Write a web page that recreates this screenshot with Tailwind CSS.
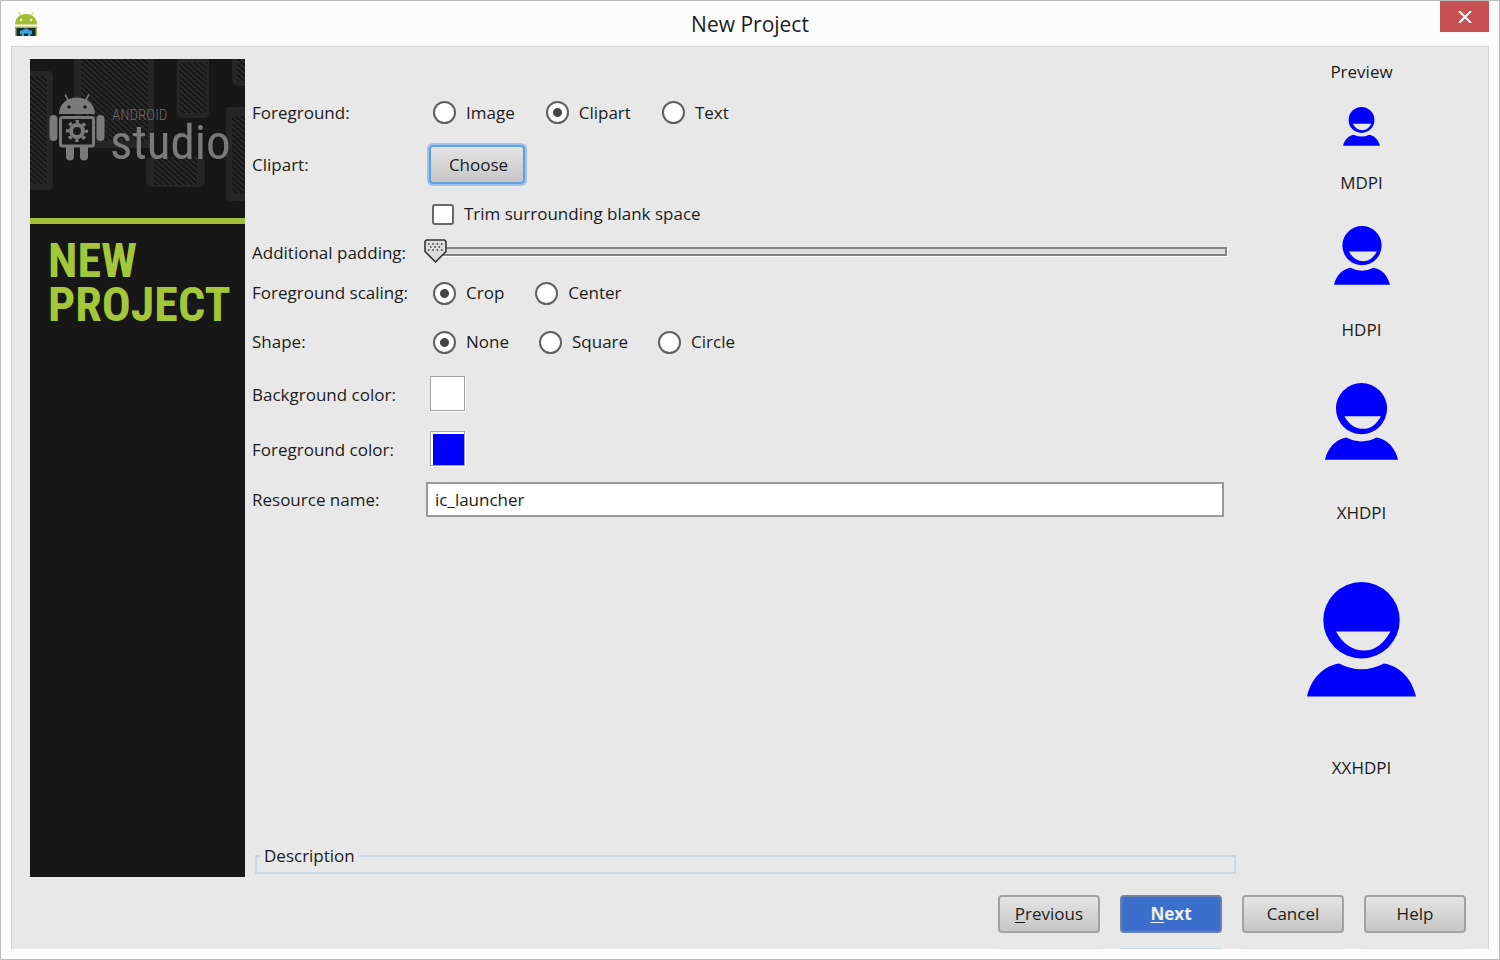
<!DOCTYPE html>
<html lang="en">

<head>
    <meta charset="utf-8" />
    <meta name="viewport" content="width=device-width, initial-scale=1" />
    <title>New Project</title>
    <script src="https://cdn.jsdelivr.net/npm/@tailwindcss/browser@4"></script>
</head>

<body class="min-h-screen flex flex-col bg-[#fcfcfc] border border-[#bababa] font-['Open_Sans',sans-serif] text-[17px] leading-6 text-[#1c1c1c]">
    <!-- title bar -->
    <header class="grid grid-cols-[1fr_auto_1fr] h-[45px] items-center px-[10px]">
        <svg class="w-6 h-6 ml-[3px]" viewBox="0 0 24 24">
            <path d="M6.500 3L4.500 .5M17.500 3L19.500 .5" stroke="#b9d26a" stroke-width="1.200" />
            <path d="M1 12.500C1 6 6 2 12 2S23 6 23 12.500Z" fill="#a0c032" />
            <circle cx="7" cy="8" r="1.200" fill="#fff" />
            <circle cx="17" cy="8" r="1.200" fill="#fff" />
            <path d="M1 14.500H23V24H1Z" fill="#a0c032" />
            <path d="M2.500 16H21.500V24H2.500Z" fill="#1b2a33" />
            <path d="M7.500 24V22H6V18.500H9V17.500H10.500V16.500H13.500V17.500H15V18.500H18V22H16.500V24H14V21.500H10V24Z" fill="#3da5dc" />
        </svg>
        <h1 class="text-[21px]">New Project</h1>
        <button aria-label="Close" class="justify-self-end self-start w-[49px] h-[31px] bg-[#c75050] flex items-center justify-center">
            <svg class="w-[14px] h-3" viewBox="0 0 14 12"><path d="M1 0L13 12M13 0L1 12" stroke="#fff" stroke-width="2" /></svg>
        </button>
    </header>

    <main class="flex-1 flex flex-col mx-[10px] mb-[10px] bg-[#e8e8e8] border border-b-0 border-[#d4d4d4]">
        <div class="flex-1 flex pl-[18px]">
            <!-- banner -->
            <aside class="w-[215px] shrink-0 mt-3 bg-[#171717]">
                <svg class="block w-full h-[159px]" viewBox="0 0 215 159">
                    <defs>
                        <pattern id="hatch" width="4" height="4" patternUnits="userSpaceOnUse" patternTransform="rotate(-48)">
                            <rect width="4" height="4" fill="#151515" />
                            <rect width="2" height="4" fill="#292929" />
                        </pattern>
                    </defs>
                    <g fill="#262626">
                        <rect x="-10" y="12" width="33" height="119" rx="5" />
                        <rect x="44" y="-10" width="80" height="99" rx="5" />
                        <rect x="147" y="-10" width="32" height="69" rx="5" />
                        <rect x="202" y="-10" width="30" height="37" rx="7" />
                        <rect x="196" y="48" width="40" height="94" rx="4" />
                        <rect x="116" y="98" width="59" height="30" rx="6" />
                    </g>
                    <g fill="url(#hatch)">
                        <rect x="-10" y="17" width="27" height="108" />
                        <rect x="51" y="-10" width="67" height="92" />
                        <rect x="149" y="4" width="28" height="50" />
                        <rect x="207" y="-10" width="20" height="32" />
                        <rect x="202" y="57" width="20" height="77" />
                        <rect x="124" y="99" width="43" height="27" />
                    </g>
                    <g fill="#7a7a7a">
                        <path d="M29 55C29 45 37 38.500 47 38.500S65 45 65 55Z" />
                        <path d="M38.500 41.500L35 35.500M55.500 41.500L59 35.500" stroke="#7a7a7a" stroke-width="1.500" />
                        <rect x="19.500" y="56" width="8" height="26" rx="4" />
                        <rect x="66.500" y="56" width="8" height="26" rx="4" />
                        <rect x="36" y="84" width="8" height="17.500" rx="4" />
                        <rect x="50" y="84" width="8" height="17.500" rx="4" />
                        <rect x="30.500" y="58.500" width="33" height="28.500" rx="2" fill="#1a1a1a" stroke="#7a7a7a" stroke-width="3" />
                        <circle cx="47" cy="72" r="6" fill="none" stroke="#7a7a7a" stroke-width="4" />
                        <circle cx="47" cy="72" r="9.500" fill="none" stroke="#7a7a7a" stroke-width="3" stroke-dasharray="3.500 3.960" stroke-dashoffset="1.750" />
                    </g>
                    <circle cx="39" cy="48" r="1.700" fill="#1a1a1a" />
                    <circle cx="55" cy="48" r="1.700" fill="#1a1a1a" />
                    <text x="82" y="61" fill="#6b6b6b" class="font-['Roboto_Condensed',Roboto,sans-serif] text-[15px] font-light">ANDROID</text>
                    <text x="80" y="100" fill="#7a7a7a" class="font-['Roboto_Condensed',Roboto,sans-serif] text-[49px]">studio</text>
                </svg>
                <div class="h-[6px] bg-[#a0c03a]"></div>
                <h2 class="pt-[15px] pl-[18px] font-['Roboto_Condensed',Roboto,sans-serif] font-bold text-[48px] leading-[44px] text-[#a4c639]">NEW<br />PROJECT</h2>
            </aside>

            <div class="flex-1 flex flex-col justify-between pl-[7px]">
                <form id="icon-form" class="mt-[41px] grid grid-cols-[174px_1fr] grid-rows-[49px_55px_44px_34px_46px_52px_53px_57px_43px] items-center">
                    <span id="fg-label">Foreground:</span>
                    <div role="radiogroup" aria-labelledby="fg-label" class="flex gap-[31px] pl-[7px]">
                        <label class="flex items-center gap-[10px]"><input type="radio" name="fg" class="appearance-none w-[23px] h-[23px] rounded-full border-2 border-[#606060] bg-white checked:bg-[radial-gradient(circle,#444_4px,#fff_5px)]" />Image</label>
                        <label class="flex items-center gap-[10px]"><input type="radio" name="fg" checked class="appearance-none w-[23px] h-[23px] rounded-full border-2 border-[#606060] bg-white checked:bg-[radial-gradient(circle,#444_4px,#fff_5px)]" />Clipart</label>
                        <label class="flex items-center gap-[10px]"><input type="radio" name="fg" class="appearance-none w-[23px] h-[23px] rounded-full border-2 border-[#606060] bg-white checked:bg-[radial-gradient(circle,#444_4px,#fff_5px)]" />Text</label>
                    </div>

                    <label for="choose">Clipart:</label>
                    <div class="pl-[3px]">
                        <button id="choose" type="button" class="w-[96px] h-[39px] pl-[3px] rounded-[4px] border-2 border-[#5f9fe0] ring-2 ring-[#9cc3ec] bg-linear-to-b from-[#e4e4e4] to-[#c6c6c6]">Choose</button>
                    </div>

                    <span></span>
                    <label class="flex items-center gap-[10px] pl-[6px]"><input type="checkbox" class="appearance-none w-[22px] h-[21px] rounded-[3px] border-2 border-[#686868] bg-white checked:bg-[#444]" />Trim surrounding blank space</label>

                    <label for="padding">Additional padding:</label>
                    <div class="relative mr-[9px] mb-1 h-6">
                        <input id="padding" type="range" min="0" max="100" value="0" class="appearance-none block w-full h-6 bg-transparent [&::-webkit-slider-runnable-track]:h-[9px] [&::-webkit-slider-runnable-track]:bg-[#dedede] [&::-webkit-slider-runnable-track]:border-2 [&::-webkit-slider-runnable-track]:border-[#858585] [&::-webkit-slider-runnable-track]:shadow-[1px_1px_0_#fff] [&::-webkit-slider-thumb]:appearance-none [&::-webkit-slider-thumb]:w-[22px] [&::-webkit-slider-thumb]:h-6" />
                        <div class="absolute left-0 top-0 w-[10px] h-6 bg-[#e8e8e8] pointer-events-none"></div>
                        <svg class="absolute -left-[2px] top-0 w-[23px] h-6 pointer-events-none" viewBox="0 0 23 24">
                            <path d="M2.500 1H20.500L22 2.500V12.500L11.500 23L1 12.500V2.500Z" fill="#dcdcdc" stroke="#333" stroke-width="1.600" />
                            <path d="M4 5H19M6 8H18M4 11H19" stroke="#333" stroke-width="1.500" stroke-dasharray="1.500 2.800" />
                        </svg>
                    </div>

                    <span id="scaling-label">Foreground scaling:</span>
                    <div role="radiogroup" aria-labelledby="scaling-label" class="flex gap-[31px] pl-[7px]">
                        <label class="flex items-center gap-[10px]"><input type="radio" name="scaling" checked class="appearance-none w-[23px] h-[23px] rounded-full border-2 border-[#606060] bg-white checked:bg-[radial-gradient(circle,#444_4px,#fff_5px)]" />Crop</label>
                        <label class="flex items-center gap-[10px]"><input type="radio" name="scaling" class="appearance-none w-[23px] h-[23px] rounded-full border-2 border-[#606060] bg-white checked:bg-[radial-gradient(circle,#444_4px,#fff_5px)]" />Center</label>
                    </div>

                    <span id="shape-label">Shape:</span>
                    <div role="radiogroup" aria-labelledby="shape-label" class="flex gap-[30px] pl-[7px]">
                        <label class="flex items-center gap-[10px]"><input type="radio" name="shape" checked class="appearance-none w-[23px] h-[23px] rounded-full border-2 border-[#606060] bg-white checked:bg-[radial-gradient(circle,#444_4px,#fff_5px)]" />None</label>
                        <label class="flex items-center gap-[10px]"><input type="radio" name="shape" class="appearance-none w-[23px] h-[23px] rounded-full border-2 border-[#606060] bg-white checked:bg-[radial-gradient(circle,#444_4px,#fff_5px)]" />Square</label>
                        <label class="flex items-center gap-[10px]"><input type="radio" name="shape" class="appearance-none w-[23px] h-[23px] rounded-full border-2 border-[#606060] bg-white checked:bg-[radial-gradient(circle,#444_4px,#fff_5px)]" />Circle</label>
                    </div>

                    <label for="bg-color">Background color:</label>
                    <div class="pl-1 pb-[2px]"><button id="bg-color" type="button" aria-label="Background color" class="block w-[35px] h-[35px] border border-[#a4a4a4] shadow-[1px_1px_0_#fff] bg-white"></button></div>

                    <label for="fg-color">Foreground color:</label>
                    <div class="pl-1 pb-[2px]"><button id="fg-color" type="button" aria-label="Foreground color" class="block w-[35px] h-[35px] border border-[#a4a4a4] shadow-[1px_1px_0_#fff] bg-white pl-[2px] pt-[2px]"><span class="block w-full h-full bg-[#0000ff]"></span></button></div>

                    <label for="res-name">Resource name:</label>
                    <input id="res-name" type="text" value="ic_launcher" class="mr-3 h-[35px] px-[7px] border-2 border-[#999] bg-white" />
                </form>

                <fieldset class="ml-[3px] mb-[3px] h-[30px] border-2 border-[#c8d7e6] pl-[3px]">
                    <legend class="px-1">Description</legend>
                </fieldset>
            </div>

            <!-- launcher icon at each density -->
            <section class="w-[252px] shrink-0 pt-[13px] pr-px flex flex-col items-center">
                <svg class="hidden">
                    <symbol id="person" viewBox="0 0 109 115">
                        <path fill-rule="evenodd" d="M54.500 0A38.200 38.200 0 1 1 54.500 76.400A38.200 38.200 0 1 1 54.500 0ZM29 49.500C35 61 45 68.500 57 68.500S77 61 83.500 49.500Z" />
                        <path d="M0 114.500C4 97 16 84 32 81.500Q54.500 93 77 81.500C93 84 105 97 109 114.500Z" />
                    </symbol>
                </svg>
                <h2>Preview</h2>
                <svg class="mt-[23px] w-[37px] h-[39px] fill-[#0000ff]"><use href="#person" /></svg>
                <p class="mt-[25px]">MDPI</p>
                <svg class="mt-[31px] w-[56px] h-[59px] fill-[#0000ff]"><use href="#person" /></svg>
                <p class="mt-[33px]">HDPI</p>
                <svg class="mt-[41px] w-[73px] h-[77px] fill-[#0000ff]"><use href="#person" /></svg>
                <p class="mt-[41px]">XHDPI</p>
                <svg class="mt-[57px] w-[109px] h-[115px] fill-[#0000ff]"><use href="#person" /></svg>
                <p class="mt-[59px]">XXHDPI</p>
            </section>
        </div>

        <footer class="flex justify-end gap-5 pt-[18px] pb-[15px] pr-[22px]">
            <button class="w-[102px] h-[38px] rounded-[4px] border-2 border-[#a2a2a2] bg-linear-to-b from-[#e4e4e4] to-[#c6c6c6]"><u class="underline-offset-2">P</u>revious</button>
            <button class="w-[102px] h-[38px] rounded-[4px] border-2 border-[#6d82a8] bg-[#3b6fcb] font-bold text-[#f0f0f0]"><u class="underline-offset-2">N</u>ext</button>
            <button class="w-[102px] h-[38px] rounded-[4px] border-2 border-[#a2a2a2] bg-linear-to-b from-[#e4e4e4] to-[#c6c6c6]">Cancel</button>
            <button class="w-[102px] h-[38px] rounded-[4px] border-2 border-[#a2a2a2] bg-linear-to-b from-[#e4e4e4] to-[#c6c6c6]">Help</button>
        </footer>
        <!-- faint reflection under the buttons -->
        <div class="flex justify-end gap-5 pr-[22px]" aria-hidden="true">
            <span class="w-[102px] h-px bg-[#e2e2e2]"></span>
            <span class="w-[102px] h-px bg-[#cbdbea]"></span>
            <span class="w-[102px] h-px bg-[#e2e2e2]"></span>
            <span class="w-[102px] h-px bg-[#e2e2e2]"></span>
        </div>
    </main>
</body>

</html>
